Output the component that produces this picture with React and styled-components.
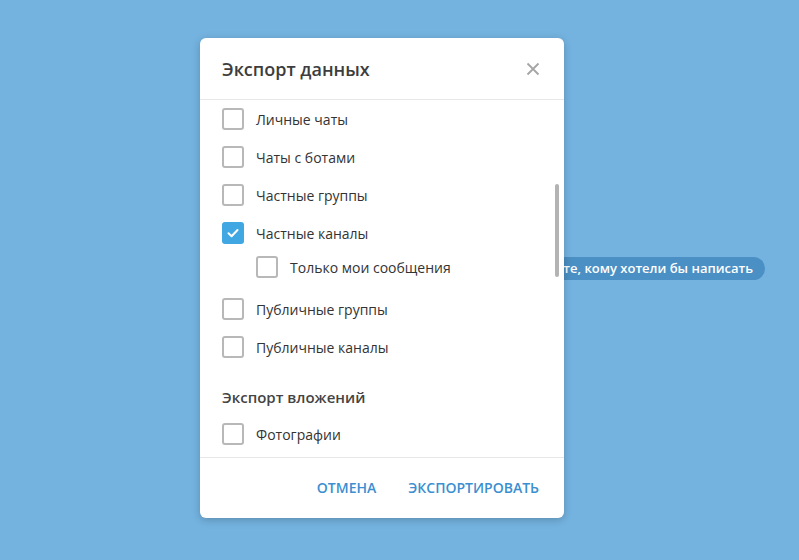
import React from "react";
import styled, { createGlobalStyle } from "styled-components";

const Global = createGlobalStyle`
  html, body { margin: 0; padding: 0; }
  body {
    width: 799px; height: 560px; overflow: hidden;
    background: #74b3e0;
    font-family: "Open Sans", "Noto Sans", sans-serif;
  }
`;

const Page = styled.div`
  position: relative;
  width: 799px;
  height: 560px;
  box-sizing: border-box;
  padding: 38px 0 0 200px;
`;

const Hint = styled.div`
  position: absolute;
  top: 257px;
  right: 34px;
  height: 23px;
  line-height: 23px;
  padding: 0 12px;
  border-radius: 12px;
  background: #4b90c4;
  color: #fff;
  font-size: 13px;
  font-weight: 600;
  white-space: nowrap;
`;

const Dialog = styled.div`
  position: relative;
  z-index: 1;
  width: 364px;
  height: 480px;
  background: #fff;
  border-radius: 6px;
  box-shadow: 0 2px 8px rgba(0, 0, 0, 0.22);
  display: flex;
  flex-direction: column;
  overflow: hidden;
`;

const Header = styled.div`
  height: 61px;
  flex: none;
  display: flex;
  align-items: center;
  justify-content: space-between;
  padding: 0 22px;
  border-bottom: 1px solid #e7e7e7;
`;

const Title = styled.div`
  font-size: 18px;
  font-weight: 600;
  color: #3d3d3d;
  margin-top: 1px;
`;

const Close = styled.button`
  border: 0;
  background: none;
  padding: 0;
  width: 20px;
  height: 20px;
  display: flex;
  align-items: center;
  justify-content: center;
  margin-right: -1px;
  cursor: pointer;
`;

const Body = styled.div`
  position: relative;
  flex: 1;
  overflow: hidden;
  border-bottom: 1px solid #e7e7e7;
`;

const List = styled.div`
  display: flex;
  flex-direction: column;
`;

const Row = styled.label`
  display: flex;
  align-items: center;
  gap: 12px;
  height: ${(p) => (p.$sub ? 30 : 38)}px;
  margin-bottom: ${(p) => (p.$sub ? 8 : 0)}px;
  padding-left: ${(p) => (p.$sub ? 56 : 22)}px;
  font-size: 14px;
  color: #333;
`;

const Box = styled.span`
  flex: none;
  box-sizing: border-box;
  width: 22px;
  height: 22px;
  border-radius: 3px;
  border: ${(p) => (p.$checked ? "none" : "2px solid #b8b8b8")};
  background: ${(p) => (p.$checked ? "#40a7e3" : "#fff")};
  display: flex;
  align-items: center;
  justify-content: center;
`;

const Section = styled.div`
  padding: 20px 22px 7px;
  line-height: 22px;
  font-size: 15px;
  font-weight: 600;
  color: #444;
`;

const Scrollbar = styled.div`
  position: absolute;
  right: 5px;
  top: 84px;
  width: 4px;
  height: 93px;
  border-radius: 2px;
  background: #b3b3b3;
`;

const Footer = styled.div`
  flex: none;
  box-sizing: border-box;
  height: 60px;
  padding: 0 25px 2px;
  display: flex;
  align-items: center;
  justify-content: flex-end;
  gap: 32px;
`;

const Action = styled.button`
  border: 0;
  background: none;
  padding: 0;
  font-family: inherit;
  font-size: 14px;
  font-weight: 600;
  color: #3b8fd0;
  text-transform: uppercase;
  cursor: pointer;
`;

const Check = ({ checked }) => (
  <Box $checked={checked}>
    {checked && (
      <svg width="14" height="14" viewBox="0 0 14 14">
        <path d="M2.5 7.2 L5.6 10.2 L11.5 4" fill="none" stroke="#fff" strokeWidth="2" strokeLinecap="round" strokeLinejoin="round" />
      </svg>
    )}
  </Box>
);

const Item = ({ label, checked, sub }) => (
  <Row $sub={sub}>
    <Check checked={checked} />
    {label}
  </Row>
);

export default function App() {
  return (
    <>
      <Global />
      <Page>
        <Hint>Выберите, кому хотели бы написать</Hint>
        <Dialog>
          <Header>
            <Title>Экспорт данных</Title>
            <Close aria-label="Закрыть">
              <svg width="14" height="14" viewBox="0 0 14 14">
                <path d="M1.5 1.5 L12.5 12.5 M12.5 1.5 L1.5 12.5" stroke="#a5a5a5" strokeWidth="1.8" />
              </svg>
            </Close>
          </Header>
          <Body>
            <List>
              <Item label="Личные чаты" />
              <Item label="Чаты с ботами" />
              <Item label="Частные группы" />
              <Item label="Частные каналы" checked />
              <Item label="Только мои сообщения" sub />
              <Item label="Публичные группы" />
              <Item label="Публичные каналы" />
              <Section>Экспорт вложений</Section>
              <Item label="Фотографии" />
            </List>
            <Scrollbar />
          </Body>
          <Footer>
            <Action>Отмена</Action>
            <Action>Экспортировать</Action>
          </Footer>
        </Dialog>
      </Page>
    </>
  );
}
